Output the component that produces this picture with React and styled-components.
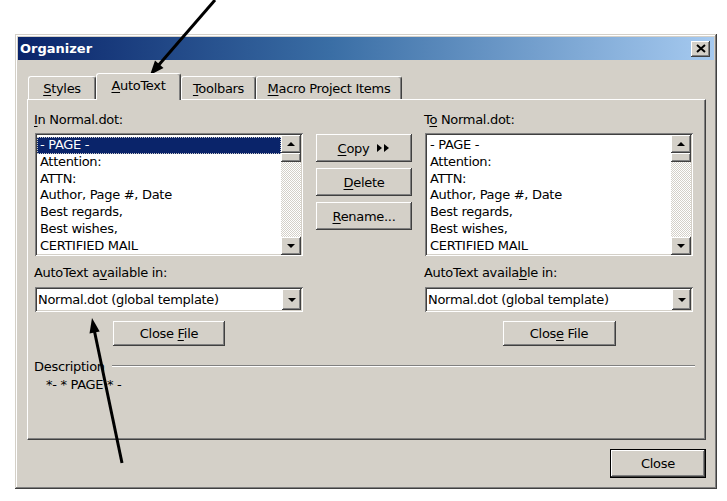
import React from 'react';
import styled, { createGlobalStyle, css } from 'styled-components';

const Global = createGlobalStyle`
  html, body { margin: 0; padding: 0; background: #fff; }
  body {
    font-family: "DejaVu Sans", Verdana, sans-serif;
    font-size: 13px;
    letter-spacing: -0.3px;
    color: #000;
  }
  * { box-sizing: border-box; }
`;

const raised = css`
  background: #d4d0c8;
  box-shadow: inset -1px -1px #404040, inset 1px 1px #fff, inset -2px -2px #808080, inset 2px 2px #d4d0c8;
`;

const sunken = css`
  box-shadow: inset 1px 1px #808080, inset -1px -1px #fff, inset 2px 2px #404040, inset -2px -2px #d4d0c8;
`;

const Page = styled.div`
  position: relative;
  width: 727px;
  height: 501px;
  overflow: hidden;
  padding: 34px 0 0 15px;
`;

const Dialog = styled.div`
  width: 702px;
  height: 455px;
  padding: 3px;
  display: flex;
  flex-direction: column;
  background: #d4d0c8;
  box-shadow: inset -1px -1px #404040, inset 1px 1px #d4d0c8, inset -2px -2px #808080, inset 2px 2px #fff;
`;

const TitleBar = styled.div`
  height: 23px;
  display: flex;
  align-items: center;
  justify-content: space-between;
  padding: 0 4px 0 2px;
  background: linear-gradient(to right, #0a246a 0%, #3a6ea5 45%, #a6caf0 100%);
`;

const Title = styled.span`
  color: #fff;
  font-weight: bold;
  font-size: 13px;
  letter-spacing: 0;
`;

const TitleClose = styled.div`
  ${raised};
  width: 19px;
  height: 16px;
  display: grid;
  place-items: center;
`;

const TabRow = styled.div`
  display: flex;
  align-items: flex-end;
  height: 26px;
  margin: 13px 0 0 10px;
`;

const Tab = styled.div`
  width: ${(p) => p.$w}px;
  height: ${(p) => (p.$active ? 27 : 23)}px;
  margin-bottom: ${(p) => (p.$active ? -1 : 0)}px;
  position: relative;
  z-index: ${(p) => (p.$active ? 2 : 1)};
  display: flex;
  align-items: center;
  justify-content: center;
  padding-bottom: ${(p) => (p.$active ? 3 : 0)}px;
  background: #d4d0c8;
  border-top: 1px solid #fff;
  border-left: 1px solid #fff;
  border-right: 1px solid #404040;
  border-radius: 3px 3px 0 0;
  box-shadow: inset -1px 0 #808080;
  white-space: nowrap;
`;

const Panel = styled.div`
  margin: 0 8px 0 9px;
  height: 341px;
  border-top: 1px solid #fff;
  border-left: 1px solid #fff;
  border-right: 1px solid #404040;
  border-bottom: 1px solid #404040;
  box-shadow: inset -1px -1px #808080;
  padding: 12px 12px 0 7px;
  display: flex;
  flex-direction: column;
`;

const Columns = styled.div`
  display: grid;
  grid-template-columns: 268px 96px 268px;
  column-gap: 13px;
`;

const Column = styled.div`
  display: flex;
  flex-direction: column;
`;

const Label = styled.div`
  height: 16px;
  line-height: 16px;
  margin-top: ${(p) => p.$mt || 0}px;
  margin-left: -1px;
  white-space: nowrap;
`;

const U = styled.span`
  text-decoration: underline;
  text-underline-offset: 2px;
`;

const ListBox = styled.div`
  ${sunken};
  background: #fff;
  margin-top: 5px;
  height: 123px;
  padding: 2px 2px 1px 2px;
  display: flex;
`;

const Items = styled.div`
  flex: 1;
  overflow: hidden;
  padding-top: 2px;
`;

const Item = styled.div`
  height: 16.8px;
  line-height: 16.8px;
  padding-left: 3px;
  white-space: nowrap;
  ${(p) =>
    p.$selected &&
    css`
      background: #0a246a;
      color: #fff;
      outline: 1px dotted #c8c8c8;
      outline-offset: -1px;
    `}
`;

const ScrollBar = styled.div`
  width: 20px;
  display: flex;
  flex-direction: column;
  padding-top: 0;
`;

const ScrollBtn = styled.div`
  ${raised};
  height: 18px;
  display: grid;
  place-items: center;
`;

const Thumb = styled.div`
  ${raised};
  height: 9px;
`;

const Track = styled.div`
  flex: 1;
  background: repeating-conic-gradient(#d4d0c8 0 25%, #fff 0 50%) 0 0 / 2px 2px;
`;

const Tri = styled.div`
  width: 0;
  height: 0;
  border-left: 4px solid transparent;
  border-right: 4px solid transparent;
  ${(p) =>
    p.$up
      ? css`border-bottom: 4px solid #000;`
      : css`border-top: 4px solid #000;`}
`;

const Combo = styled.div`
  ${sunken};
  background: #fff;
  margin-top: 6px;
  height: 25px;
  padding: 2px;
  display: flex;
  align-items: center;
  white-space: nowrap;
`;

const ComboText = styled.span`
  padding-left: 1px;
  flex: 1;
`;

const DropBtn = styled.div`
  ${raised};
  width: 19px;
  height: 21px;
  display: grid;
  place-items: center;
`;

const Button = styled.div`
  ${raised};
  width: ${(p) => p.$w}px;
  height: ${(p) => p.$h}px;
  display: flex;
  align-items: center;
  justify-content: center;
  gap: 8px;
  white-space: nowrap;
  ${(p) =>
    p.$default &&
    css`
      border: 1px solid #000;
    `}
`;

const CenterButton = styled(Button)`
  align-self: center;
  margin-top: 9px;
`;

const ButtonStack = styled.div`
  padding-top: 22px;
  display: flex;
  flex-direction: column;
  gap: 6px;
`;

const DescRow = styled.div`
  margin-top: 13px;
  display: flex;
  align-items: center;
`;

const Etched = styled.div`
  flex: 1;
  height: 2px;
  margin: 0 -2px 3px 7px;
  border-top: 1px solid #808080;
  border-bottom: 1px solid #fff;
`;

const DescText = styled.div`
  margin-top: 2px;
  padding-left: 11px;
  line-height: 16px;
  white-space: pre;
`;

const Footer = styled.div`
  display: flex;
  justify-content: flex-end;
  margin: 9px 8px 0 0;
`;

const Overlay = styled.svg`
  position: absolute;
  left: 0;
  top: 0;
  pointer-events: none;
`;

const ITEMS = [
  '- PAGE -',
  'Attention:',
  'ATTN:',
  'Author, Page #, Date',
  'Best regards,',
  'Best wishes,',
  'CERTIFIED MAIL',
];

function List({ selected }) {
  return (
    <ListBox>
      <Items>
        {ITEMS.map((t, i) => (
          <Item key={t} $selected={i === selected}>
            {t}
          </Item>
        ))}
      </Items>
      <ScrollBar>
        <ScrollBtn>
          <Tri $up />
        </ScrollBtn>
        <Thumb />
        <Track />
        <ScrollBtn>
          <Tri />
        </ScrollBtn>
      </ScrollBar>
    </ListBox>
  );
}

function ComboBox() {
  return (
    <Combo>
      <ComboText>Normal.dot (global template)</ComboText>
      <DropBtn>
        <Tri />
      </DropBtn>
    </Combo>
  );
}

export default function App() {
  return (
    <Page>
      <Global />
      <Dialog>
        <TitleBar>
          <Title>Organizer</Title>
          <TitleClose>
            <svg width="10" height="9" viewBox="0 0 10 9">
              <path d="M1 1L9 8M9 1L1 8" stroke="#000" strokeWidth="2" />
            </svg>
          </TitleClose>
        </TitleBar>
        <TabRow>
          <Tab $w={68}>
            <span><U>S</U>tyles</span>
          </Tab>
          <Tab $w={85} $active>
            <span><U>A</U>utoText</span>
          </Tab>
          <Tab $w={75}>
            <span><U>T</U>oolbars</span>
          </Tab>
          <Tab $w={146}>
            <span><U>M</U>acro Project Items</span>
          </Tab>
        </TabRow>
        <Panel>
          <Columns>
            <Column>
              <Label>
                <U>I</U>n Normal.dot:
              </Label>
              <List selected={0} />
              <Label $mt={9}>
                AutoText a<U>v</U>ailable in:
              </Label>
              <ComboBox />
              <CenterButton $w={112} $h={25}>
                <span>Close <U>F</U>ile</span>
              </CenterButton>
            </Column>
            <ButtonStack>
              <Button $w={96} $h={28}>
                <span><U>C</U>opy</span>
                <svg width="13" height="8" viewBox="0 0 13 8">
                  <path d="M0 0L5 4L0 8ZM7 0L12 4L7 8Z" fill="#000" />
                </svg>
              </Button>
              <Button $w={96} $h={28}>
                <span><U>D</U>elete</span>
              </Button>
              <Button $w={96} $h={28}>
                <span><U>R</U>ename...</span>
              </Button>
            </ButtonStack>
            <Column>
              <Label>
                T<U>o</U> Normal.dot:
              </Label>
              <List selected={-1} />
              <Label $mt={9}>
                AutoText availa<U>b</U>le in:
              </Label>
              <ComboBox />
              <CenterButton $w={113} $h={25}>
                <span>Clos<U>e</U> File</span>
              </CenterButton>
            </Column>
          </Columns>
          <DescRow>
            <Label>Description</Label>
            <Etched />
          </DescRow>
          <DescText>{'*- * PAGE * -'}</DescText>
        </Panel>
        <Footer>
          <Button $w={96} $h={29} $default>
            <span>Close</span>
          </Button>
        </Footer>
      </Dialog>
      <Overlay width="727" height="501" viewBox="0 0 727 501">
        <line x1="215" y1="0" x2="157" y2="67" stroke="#000" strokeWidth="3" />
        <polygon points="150,75 163.5,68 155,60.5" fill="#000" />
        <line x1="122" y1="463" x2="94" y2="329" stroke="#000" strokeWidth="3" />
        <polygon points="92,318 99.7,331.5 89.5,333.5" fill="#000" />
      </Overlay>
    </Page>
  );
}
